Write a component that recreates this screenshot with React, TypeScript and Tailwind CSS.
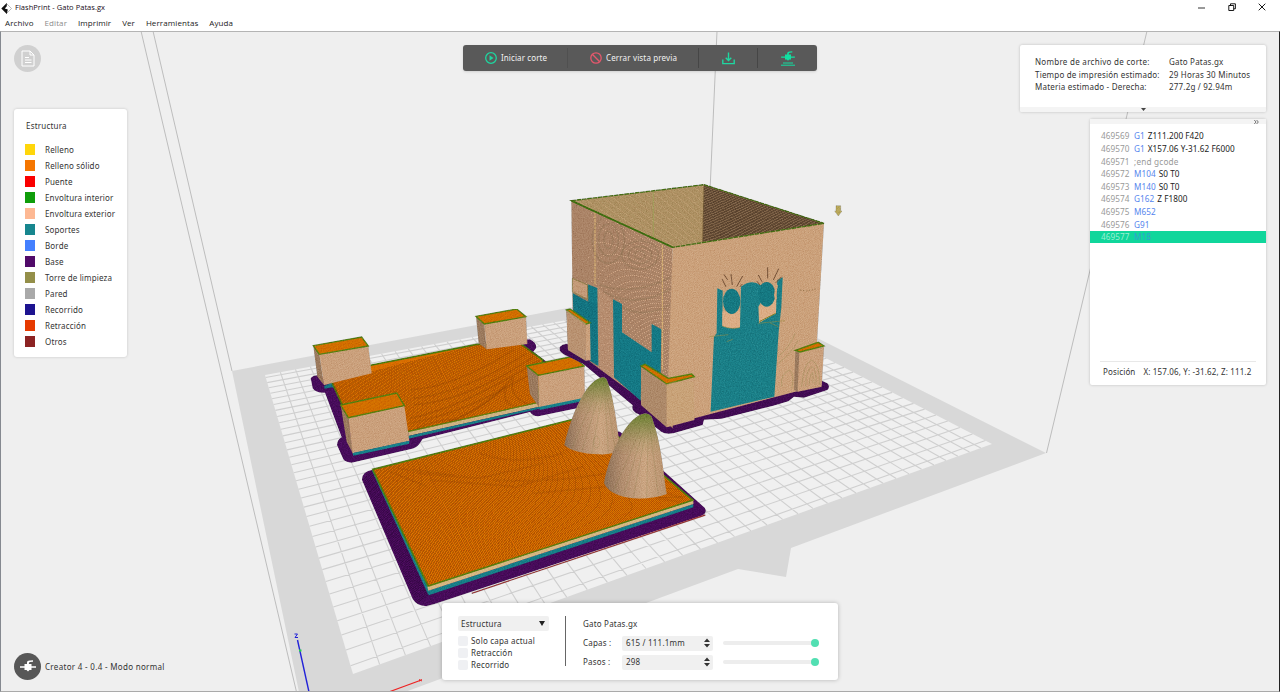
import React from "react";

type Pt = [number, number];

const legend = [
  { name: "Relleno", color: "bg-[#ffd60a]" },
  { name: "Relleno sólido", color: "bg-[#f57600]" },
  { name: "Puente", color: "bg-[#fa0000]" },
  { name: "Envoltura interior", color: "bg-[#0f9d0a]" },
  { name: "Envoltura exterior", color: "bg-[#fdb893]" },
  { name: "Soportes", color: "bg-[#17868e]" },
  { name: "Borde", color: "bg-[#4480ff]" },
  { name: "Base", color: "bg-[#510a69]" },
  { name: "Torre de limpieza", color: "bg-[#948f49]" },
  { name: "Pared", color: "bg-[#a9a9a9]" },
  { name: "Recorrido", color: "bg-[#1d1390]" },
  { name: "Retracción", color: "bg-[#e63a00]" },
  { name: "Otros", color: "bg-[#8c2323]" },
];

const gcode = [
  ["469569", "G1", "Z111.200 F420"],
  ["469570", "G1", "X157.06 Y-31.62 F6000"],
  ["469571", "", ";end gcode"],
  ["469572", "M104", "S0 T0"],
  ["469573", "M140", "S0 T0"],
  ["469574", "G162", "Z F1800"],
  ["469575", "M652", ""],
  ["469576", "G91", ""],
  ["469577", "M18", ""],
];

/* Projects a point of the unit build plate onto the screen. */
function plate(u: number, v: number): Pt {
  const g = 0.5636;
  const h = 0.8253;
  const w = 1 + g * u + h * v;
  const x = (353 + (639 + g * 992) * u + (-88 + h * 265) * v) / w;
  const y = (674 + (-230 + g * 444) * u + (-299 + h * 375) * v) / w;
  return [x, y];
}

function gridPath() {
  let d = "";
  for (let i = 1; i < 37; i++) {
    const a = plate(i / 37, 0);
    const b = plate(i / 37, 1);
    d += `M${a[0].toFixed(1)} ${a[1].toFixed(1)}L${b[0].toFixed(1)} ${b[1].toFixed(1)}`;
  }
  for (let i = 0; i < 33; i++) {
    const t = (i + 0.5) / 33;
    const a = plate(0, t);
    const b = plate(1, t);
    d += `M${a[0].toFixed(1)} ${a[1].toFixed(1)}L${b[0].toFixed(1)} ${b[1].toFixed(1)}`;
  }
  return d;
}

/* Lines ruled between edge a-b and edge d-c: the printed strands of a face. */
function ruled(a: Pt, b: Pt, c: Pt, d: Pt, n: number) {
  let s = "";
  for (let i = 0; i <= n; i++) {
    const t = i / n;
    s += `M${(a[0] + (b[0] - a[0]) * t).toFixed(2)} ${(a[1] + (b[1] - a[1]) * t).toFixed(2)}L${(d[0] + (c[0] - d[0]) * t).toFixed(2)} ${(d[1] + (c[1] - d[1]) * t).toFixed(2)}`;
  }
  return s;
}

function Strands({ pts, n, color = "#5a3a10", o = 0.4, w = 2 }: { pts: [Pt, Pt, Pt, Pt]; n: number; color?: string; o?: number; w?: number }) {
  return <path d={ruled(pts[0], pts[1], pts[2], pts[3], n)} stroke={color} strokeOpacity={o} strokeWidth={w} fill="none" shapeRendering="crispEdges" />;
}

function Block({ top, front, side }: { top: string; front: string; side: string }) {
  return (
    <g>
      <polygon points={side} fill="#9d7c61" />
      <polygon points={side} fill="url(#grain)" />
      <polygon points={front} fill="#d3a884" />
      <polygon points={front} fill="url(#grain)" />
      <polygon points={top} fill="#e57a00" />
      <polygon points={top} fill="url(#fill)" stroke="#56810e" strokeWidth="4" />
    </g>
  );
}

function Scene() {
  return (
    <svg className="absolute inset-0 h-full w-full" viewBox="1 32 1278 659" preserveAspectRatio="none">
      <defs>
        <filter id="speckle" x="0" y="0" width="1" height="1" colorInterpolationFilters="sRGB">
          <feTurbulence type="fractalNoise" baseFrequency="0.27" numOctaves="2" seed="4" result="n" />
          <feColorMatrix in="n" type="matrix" values="0.38 0 0 0 0.3  0.38 0 0 0 0.3  0.38 0 0 0 0.3  0 0 0 0 1" result="g" />
          <feBlend in="SourceGraphic" in2="g" mode="hard-light" result="h" />
          <feBlend in="g" in2="SourceGraphic" mode="soft-light" result="b" />
          <feComposite in="b" in2="SourceGraphic" operator="in" />
        </filter>
        <pattern id="grain" width="8" height="6" patternUnits="userSpaceOnUse" patternTransform="rotate(-13)">
          <path d="M0 1H5M4 4H8" stroke="#72512f" strokeOpacity=".34" strokeWidth="1.6" />
          <path d="M5 1H8" stroke="#f3c89b" strokeOpacity=".4" strokeWidth="1.6" />
        </pattern>
        <pattern id="fill" width="9" height="9" patternUnits="userSpaceOnUse" patternTransform="rotate(-32)">
          <path d="M0 2H9M0 6.5H9" stroke="#823e00" strokeOpacity=".42" strokeWidth="2" />
        </pattern>
        <pattern id="tealGrain" width="9" height="7" patternUnits="userSpaceOnUse" patternTransform="rotate(18)">
          <path d="M0 1H3M5 5H7" stroke="#4ba29a" strokeOpacity=".45" strokeWidth="1.5" />
          <path d="M4 2H8" stroke="#084f59" strokeOpacity=".35" strokeWidth="1.5" />
        </pattern>
        <linearGradient id="cone" x1="0" x2="1">
          <stop offset="0" stopColor="#8b705a" />
          <stop offset=".3" stopColor="#b89375" />
          <stop offset=".65" stopColor="#d4ae8b" />
          <stop offset="1" stopColor="#bd9875" />
        </linearGradient>
        <linearGradient id="tip" x1="0" x2="0" y1="0" y2="1">
          <stop offset="0" stopColor="#587b20" stopOpacity=".85" />
          <stop offset=".35" stopColor="#74823a" stopOpacity=".15" />
          <stop offset=".5" stopColor="#74823a" stopOpacity="0" />
        </linearGradient>
        <clipPath id="clipBack">
          <polygon points="95,275 215,225 530,163 660,160 728,210 712,340 325,425 145,385" />
        </clipPath>
        <clipPath id="clipFront">
          <polygon points="68,298 726,134 1030,392 235,650" />
        </clipPath>
        <clipPath id="clipLeft">
          <polygon points="94,92 398,232 398,775 305,690 150,575 98,425" />
        </clipPath>
      </defs>

      <g stroke="#bdbdbd" strokeWidth="1" fill="none">
        <path d="M141 31L296.500 692" />
        <path d="M153 31L232 371" />
        <path d="M717 31L706 283" />
        <path d="M1147 31L1046.500 453" />
      </g>
      <path d="M232 371L705.600 282L1046 453L791 548L786 577L738 569L405 692H299Z" fill="#d8d8d8" />
      <path d="M353 674L992 444L704 295L265 375Z" fill="#f0f0f0" />
      <path d={gridPath()} stroke="#cfcfcf" strokeWidth="1.1" fill="none" />

      {/* plate with four corner blocks */}
      <g transform="translate(300 290) scale(.333333)" filter="url(#speckle)">
        <path d="M32 265Q40 253 60 256L95 275L660 150L690 148Q712 160 708 175L700 185L740 215L853 300V350L715 379Q700 380 690 366L368 447L358 462Q350 474 330 478L155 518Q135 517 130 508L111 465Q112 448 125 442L75 308Q48 310 38 295Z" fill="#480c5c" />
        <path d="M72 283L95 278L150 395L160 497L140 455Z" fill="#480c5c" />
        <path d="M72 288L95 278L108 300L97 292L74 296Z" fill="#177580" />
        <polygon points="95,275 215,225 530,163 660,160 728,210 712,340 325,425 145,385" fill="#d96f00" stroke="#4b7c0c" strokeWidth="5" />
        <g clipPath="url(#clipBack)">
          <Strands pts={[[95, 275], [660, 130], [800, 330], [150, 470]]} n={170} color="#843d00" o={0.55} />
          <g fill="none" stroke="#8d4200" strokeOpacity=".3" strokeWidth="5">
            <path d="M330 385Q470 360 720 210" /><path d="M330 400Q510 365 720 235" /><path d="M340 345Q510 330 700 200" />
            <path d="M340 325Q490 310 680 190" /><path d="M430 400Q550 365 640 260Q620 320 690 345" /><path d="M350 415Q430 380 500 390" />
            <path d="M480 380Q570 340 620 285Q600 340 650 350" /><path d="M330 300Q470 290 640 180" />
          </g>
        </g>
        <polygon points="325,425 718,338 718,350 325,438" fill="#cfb384" />
        <polygon points="325,438 718,350 718,356 325,446" fill="#177f88" />
        <path d="M325 425L712 338" stroke="#64820f" strokeWidth="3" />
        <Block top="528,79 650,57 678,80 553,102" front="553,102 678,80 682,162 560,178" side="528,79 553,102 560,178 536,160" />
        <Block top="40,167 185,141 205,168 58,193" front="58,193 205,168 215,250 72,285" side="40,167 58,193 72,285 52,260" />
        <Block top="122,345 290,309 313,347 145,383" front="145,383 313,347 328,453 158,490" side="122,345 145,383 160,493 140,455" />
        <polygon points="158,489 328,452 328,461 160,497" fill="#17838c" />
        <Block top="680,228 820,199 853,228 715,256" front="715,256 853,228 855,330 717,352" side="680,228 715,256 717,352 690,312" />
        <polygon points="717,351 850,324 850,333 719,360" fill="#17838c" />
      </g>

      {/* large hollow box */}
      <g transform="translate(540 170) scale(.333333)" filter="url(#speckle)">
        <path d="M60 530Q68 520 82 522L150 568L305 690L845 632L862 640Q872 650 862 660L792 683L762 680L745 694L700 707L545 746L492 749L488 765L400 790Q376 794 365 786L296 733Q272 722 278 706L130 582L75 555Q54 544 60 530Z" fill="#420b54" />
        <polygon points="94,92 492,44 852,160 398,232" fill="#bf9f72" />
        <polygon points="94,92 492,44 488,216 398,232" fill="url(#grain)" />
        <polygon points="492,44 852,160 488,216" fill="#806448" />
        <Strands pts={[[492, 44], [488, 216], [560, 226], [852, 160]]} n={34} color="#3b2819" o={0.7} />
        <Strands pts={[[94, 92], [398, 232], [488, 216], [492, 44]]} n={50} color="#82723c" o={0.4} w={1.5} />
        <polygon points="94,92 398,232 398,775 305,690 150,575 98,425" fill="#cda383" />
        <g clipPath="url(#clipLeft)">
          <Strands pts={[[94, 92], [94, 545], [398, 780], [398, 232]]} n={155} color="#6b4b32" o={0.5} />
          <path d="M172 350V600L225 640V395Z" fill="#c79a7c" fillOpacity=".4" />
          <g fill="none" stroke="#71643f" strokeOpacity=".2" strokeWidth="5">
            <ellipse cx="300" cy="255" rx="55" ry="42" /><ellipse cx="300" cy="255" rx="35" ry="26" /><ellipse cx="300" cy="255" rx="16" ry="12" />
            <ellipse cx="205" cy="210" rx="48" ry="70" /><ellipse cx="205" cy="210" rx="30" ry="48" /><ellipse cx="205" cy="210" rx="13" ry="26" />
            <path d="M180 345Q280 380 395 320M190 365Q290 420 395 355M215 390Q300 460 395 400" />
          </g>
        </g>
        <polygon points="398,232 852,160 823,650 463,745 380,770" fill="#d4a983" />
        <polygon points="398,232 852,160 823,650 463,745 380,770" fill="url(#grain)" />
        <g fill="#147a86">
          <path d="M98 370L145 395L143 343L172 354L175 588L150 572L148 455L100 425Z" />
          <path d="M219 388L246 402V487L335 547V462L364 478L362 612L305 592L302 692L222 622Z" />
        </g>
        <Strands pts={[[98, 370], [98, 565], [172, 585], [172, 405]]} n={40} color="#0a4d5b" o={0.3} w={1.5} />
        <path d="M97 325L143 345V388L97 365Z" fill="#d1a782" fillOpacity=".65" stroke="#7b7436" strokeWidth="2" />
        <g>
          <path d="M532 355L548 362L547 468Q575 480 600 472L603 350Q635 327 660 345L690 350L655 410L657 458L708 430L712 330L728 322L724 410L716 485L703 680L512 725L522 500L530 490Z" fill="#188089" />
          <path d="M532 355L548 362L547 468Q575 480 600 472L603 350Q635 327 660 345L690 350L655 410L657 458L708 430L712 330L728 322L724 410L716 485L703 680L512 725L522 500L530 490Z" fill="url(#tealGrain)" />
          <path d="M547 425L600 420V472Q570 478 547 468ZM657 408L708 388V430L657 458Z" fill="#dcae86" />
          <ellipse cx="575" cy="394" rx="26" ry="38" fill="#157a83" />
          <ellipse cx="680" cy="373" rx="26" ry="37" fill="#157a83" />
          <path d="M711 345L705 375L708 388" stroke="#d6a77f" strokeWidth="6" fill="none" />
          <g stroke="#775338" strokeWidth="3" fill="none">
            <path d="M546 327L558 350M573 312L577 345M608 318L590 350M552 313L563 330M600 350L607 342M655 315L667 337M683 292V325M716 296L700 330M725 320L708 338M660 345L650 333" />
          </g>
          <path d="M658 455L707 430" stroke="#82832c" strokeWidth="3" />
          <path d="M547 468Q575 480 600 472M508 500L565 494M655 460L735 452M690 459L715 470M560 515L578 508" stroke="#9a8c3c" strokeOpacity=".7" strokeWidth="2.200" fill="none" />
        </g>
        <path d="M780 360L800 363L832 356" stroke="#8a6a3e" strokeWidth="2" strokeDasharray="4 5" fill="none" />
        <path d="M165 125V345M367 225V600" stroke="#ddb875" strokeWidth="3" strokeDasharray="9 2" />
        <path d="M340 64V205" stroke="#a3a05b" strokeWidth="3" />
        <path d="M492 44L488 216" stroke="#6c5430" strokeWidth="2" />
        <path d="M94 92L492 44L852 160L398 232Z" stroke="#456f13" strokeWidth="4" strokeDasharray="14 2" fill="none" />
        <path d="M94 92L398 232" stroke="#3f6f10" strokeWidth="5" />
        <Block top="79,420 90,417 150,458 137,462" front="137,460 150,458 152,570 137,572" side="79,420 137,460 137,572 84,540" />
        <polygon points="79,420 137,460 137,572 84,540" fill="#cba27e" fillOpacity=".65" />
        <Block top="303,588 315,583 385,625 455,612 463,620 380,642" front="380,640 463,620 463,750 380,772" side="303,590 380,640 380,772 303,705" />
        <polygon points="303,592 380,643 380,772 303,705" fill="#cba27e" fillOpacity=".4" />
        <path d="M400 635H461L463 748L380 770V642Z" fill="#c7a675" fillOpacity=".5" />
        <Block top="766,541 835,517 852,528 780,546" front="778,545 852,530 845,650 773,665" side="766,543 780,545 775,665 762,660" />
        <g fill="none" stroke="#8e884c" strokeOpacity=".35" strokeWidth="3">
          <path d="M785 650Q790 580 815 570Q842 585 838 645M797 650Q797 598 817 590Q832 600 827 645M807 645Q810 610 819 608V640" />
          <path d="M715 560Q750 530 765 490M715 580Q755 550 775 510M725 650Q720 610 750 600Q765 620 755 655" />
        </g>
        <path d="M888 107H902V123H906L895 138L884 123H888Z" fill="#b9a85b" stroke="#8f823b" strokeWidth="1" />
      </g>

      {/* front plate with two cones */}
      <g transform="translate(350 370) scale(.333333)" filter="url(#speckle)">
        <path d="M68 299Q35 304 36 330L188 687Q202 710 230 708L253 702L1055 437Q1074 428 1064 413L810 185L660 160Z" fill="#480b5b" />
        <Strands pts={[[40, 330], [200, 700], [240, 670], [68, 300]]} n={75} color="#2a0538" o={0.6} />
        <path d="M365 670L1066 435" stroke="#9d3838" strokeWidth="4" />
        <path d="M66 302L235 675L240 640L70 296Z" fill="#187f88" />
        <polygon points="68,298 726,134 1030,392 235,650" fill="#dc7000" />
        <g clipPath="url(#clipFront)">
          <Strands pts={[[40, 250], [700, 85], [1120, 440], [210, 730]]} n={190} color="#863d00" o={0.6} w={2.2} />
          <g fill="none" stroke="#923f00" strokeOpacity=".2" strokeWidth="6">
            <path d="M200 310L390 325L580 280M240 330L500 350L700 290M390 250Q500 290 640 250M430 330Q600 340 770 310M550 370L770 350" />
            <path d="M120 305L230 350M140 295L310 315M920 360L1000 385M920 385L990 395" />
          </g>
        </g>
        <path d="M235 650L68 298L726 134L1030 392" fill="none" stroke="#527e0d" strokeWidth="5" />
        <polygon points="234,662 1030,402 1030,412 236,676" fill="#168089" />
        <polygon points="232,650 1030,391 1030,402 235,662" fill="#d6b883" />
        <path d="M235 648L1030 390" stroke="#55800d" strokeWidth="4" />
        {[
          "M643 225C665 130 705 40 750 24Q762 18 770 28C795 90 801 180 808 210L798 246Q775 255 748 253Q670 250 643 225Z",
          "M762 340C780 240 830 150 875 133Q893 125 905 140C935 220 940 310 950 372Q910 388 850 385Q780 378 762 340Z",
        ].map((d) => (
          <g key={d}>
            <path d={d} fill="url(#cone)" />
            <path d={d} fill="url(#grain)" />
            <path d={d} fill="url(#tip)" />
          </g>
        ))}
        <g fill="none" stroke="#7d7845" strokeOpacity=".25" strokeWidth="2.500">
          <path d="M755 30L665 235M758 40L695 245M762 50L725 250M764 60L775 250M766 50L795 235M888 140L790 365M890 150L820 378M892 160L850 382M895 160L890 382M898 160L925 376" />
          <ellipse cx="740" cy="216" rx="9" ry="18" />
        </g>
      </g>

      {/* axes */}
      <path d="M297.500 640L309 692" stroke="#2222d8" strokeWidth="1.400" />
      <path d="M299 650.500H301.500" stroke="#22d64a" strokeWidth="2" />
      <path d="M390 691.500L420 680.500" stroke="#e22" strokeWidth="1.200" />
      <path d="M419 679.500L422 681M419 681L422 679.500" stroke="#e22" strokeWidth="1" />
      <path d="M294.500 634H297.500L295 637.500H298" stroke="#2222d8" strokeWidth="1" fill="none" />
    </svg>
  );
}

function Nozzle({ className }: { className: string }) {
  return (
    <svg className={className} viewBox="0 0 18 14" fill="currentColor">
      <path d="M5.500 4H8V2.800Q8 .5 11 .6L14 .3V1.700L11 2Q9.800 2 9.800 4H12.500V6.300H17V7.800H12.500V10H10.500L9 11.500L7.500 10H5.500V7.800H1V6.300H5.500Z" />
    </svg>
  );
}

function Spin({ value }: { value: string }) {
  return (
    <div className="flex h-[15px] w-[91px] items-center justify-between rounded-xs bg-[#f0f0f0] pr-[3px] pl-1">
      <span>{value}</span>
      <svg className="h-[10px] w-[6px]" viewBox="0 0 6 10" fill="#333">
        <path d="M3 0.500L6 4H0ZM3 9.500L6 6H0Z" />
      </svg>
    </div>
  );
}

function Track() {
  return (
    <div className="flex h-2 w-[96px] items-center">
      <div className="h-1 flex-1 rounded-full bg-[#ededed]" />
      <div className="-ml-1 size-2 rounded-full bg-[#52dfb2]" />
    </div>
  );
}

export default function App() {
  return (
    <div className="flex h-[692px] w-[1280px] flex-col overflow-hidden bg-white font-['Noto_Sans','Open_Sans',sans-serif] text-[8px] leading-none tracking-[0.2px] text-[#333]">
      <header className="flex h-[31px] shrink-0 flex-col">
        <div className="flex h-4 items-center justify-between pr-[14px] pl-[1px]">
          <div className="flex items-center gap-[3px]">
            <svg className="size-[11px]" viewBox="0 0 11 11">
              <path d="M5.500 .5L10.500 5.500L5.500 10.500" fill="#fff" stroke="#999" strokeWidth=".7" />
              <path d="M5.800 0V3.200L3.800 5.500L6.800 6.500L5.800 11L.3 5.500Z" fill="#111" />
            </svg>
            <span className="font-['Open_Sans',sans-serif] text-[7.500px] tracking-[0.04px] text-[#180c20]">FlashPrint - Gato Patas.gx</span>
          </div>
          <div className="flex items-center gap-[22px] pb-[2px] text-black">
            <svg className="size-[8px]" viewBox="0 0 8 8"><path d="M0 5H7" stroke="currentColor" strokeWidth=".8" /></svg>
            <svg className="size-[8px]" viewBox="0 0 8 8" fill="none" stroke="currentColor"><path d="M.8 2.500H5.700V7.500H.8ZM2.500 2.500V.8H7.400V5.800H5.700" strokeWidth=".9" /></svg>
            <svg className="size-[8px]" viewBox="0 0 8 8"><path d="M.7 .7L7.300 7.300M7.300 .7L.7 7.300" stroke="currentColor" strokeWidth=".9" /></svg>
          </div>
        </div>
        <nav className="flex h-[13px] items-center gap-[10.900px] pl-[5px] font-['Open_Sans',sans-serif] text-[8px] tracking-[0.1px] text-[#222]">
          <span>Archivo</span>
          <span className="text-[#8c8c8c]">Editar</span>
          <span>Imprimir</span>
          <span>Ver</span>
          <span>Herramientas</span>
          <span>Ayuda</span>
        </nav>
      </header>

      <main className="relative h-[661px] overflow-hidden border-t border-r border-b border-l border-t-[#b4b4b4] border-r-[#222] border-b-[#aaa] border-l-[#858990] bg-[#efefef]">
        <Scene />

        <div className="absolute top-[13px] left-[13px] flex size-[27px] items-center justify-center rounded-full bg-[#d0d0d0] text-white">
          <svg className="h-[17px] w-[14px]" viewBox="0 0 14 17" fill="none" stroke="currentColor">
            <path d="M1 1H9L13 5V16H1ZM9 1V5H13M4 7.500H8M4 10H10.500M4 12.500H10.500" strokeWidth="1" />
          </svg>
        </div>

        <section className="absolute top-[77px] left-[13px] h-[248px] w-[113px] rounded-[3px] bg-white pt-[12px] pl-[11px] shadow-[0_0_3px_rgba(0,0,0,0.18)]">
          <h2 className="pl-[1px] leading-[10px]">Estructura</h2>
          <ul className="mt-[10.500px]">
            {legend.map((l) => (
              <li key={l.name} className="flex h-4 items-center gap-[10px] tracking-[0.15px] whitespace-nowrap">
                <span className={`h-[11px] w-[10px] ${l.color}`} />
                <span>{l.name}</span>
              </li>
            ))}
          </ul>
        </section>

        <div className="absolute top-[13px] left-[462px] flex h-[26px] w-[354px] items-center rounded-[3px] bg-[#595959] text-[#f2f2f2] shadow-sm">
          <div className="flex h-5 w-[105px] items-center gap-1 border-r border-[#505050] pl-[22px] tracking-[0.1px]">
            <svg className="size-[12px]" viewBox="0 0 12 12"><circle cx="6" cy="6" r="5.300" fill="none" stroke="#1fd6a0" strokeWidth="1.300" /><path d="M4.500 3.300L8.500 6L4.500 8.700Z" fill="#1fd6a0" /></svg>
            <span>Iniciar corte</span>
          </div>
          <div className="flex h-5 w-[131px] items-center gap-1 border-r border-[#464646] pl-[22px] tracking-[0.15px]">
            <svg className="size-[12px]" viewBox="0 0 12 12" fill="none" stroke="#e5586d" strokeWidth="1.300"><circle cx="6" cy="6" r="5.200" /><path d="M2.300 2.300L9.700 9.700" /></svg>
            <span>Cerrar vista previa</span>
          </div>
          <div className="flex h-5 w-[59px] items-center justify-center border-r border-[#464646]">
            <svg className="size-[13px]" viewBox="0 0 13 13" fill="none" stroke="#1fd6a0" strokeWidth="1.400"><path d="M.8 7.500V11.600H12.200V7.500M6.500 .5V8M3.700 5.800L6.500 8.500L9.300 5.800" /></svg>
          </div>
          <div className="flex h-5 flex-1 flex-col items-center justify-center text-[#12dfa1]">
            <Nozzle className="h-[12px] w-[16px]" />
            <svg className="-mt-[1px] h-[4px] w-[14px]" viewBox="0 0 14 4"><path d="M2 1H12M0 3.200H14" stroke="currentColor" strokeWidth="1" /></svg>
          </div>
        </div>

        <section className="absolute top-[13px] left-[1019px] flex h-[67px] w-[246px] flex-col justify-between overflow-hidden rounded-[2px] bg-white shadow-[0_0_3px_rgba(0,0,0,0.22)]">
          <dl className="grid grid-cols-[134px_1fr] pt-[11px] pl-[15px] leading-[12.500px] whitespace-nowrap">
            <dt className="tracking-[0.28px]">Nombre de archivo de corte:</dt>
            <dd>Gato Patas.gx</dd>
            <dt>Tiempo de impresión estimado:</dt>
            <dd>29 Horas 30 Minutos</dd>
            <dt>Materia estimado - Derecha:</dt>
            <dd>277.2g / 92.94m</dd>
          </dl>
          <div className="flex h-[5px] items-center justify-center bg-[#f4f4f4]">
            <svg className="h-[3px] w-[5px]" viewBox="0 0 5 3"><path d="M0 0H5L2.500 3Z" fill="#444" /></svg>
          </div>
        </section>

        <section className="absolute top-[87px] left-[1089px] flex h-[266px] w-[176px] flex-col rounded-[2px] bg-white shadow-[0_0_3px_rgba(0,0,0,0.22)]">
          <div className="flex h-[5px] items-center justify-end bg-[#f4f4f4] pr-[7px]">
            <svg className="h-[4px] w-[5px]" viewBox="0 0 5 4" fill="none" stroke="#666" strokeWidth=".9"><path d="M.3 0L2 2L.3 4M2.600 0L4.300 2L2.600 4" /></svg>
          </div>
          <ol className="mt-[6.300px] text-[8.200px] tracking-[0.05px]">
            {gcode.map(([n, cmd, rest]) => (
              <li key={n} className={n === "469577" ? "flex h-[12px] items-center bg-[#10d69b] pl-[11px] text-[#9aefd2]" : "flex h-[12.600px] items-center pl-[11px] text-[#999]"}>
                <span className="w-[33px]">{n}</span>
                <span className={n === "469577" ? "text-[#329fd0]" : "text-[#5585ee]"}>{cmd}</span>
                <span className={cmd ? "ml-[3px] text-[#222]" : "tracking-[0.2px] text-[#999]"}>{rest}</span>
              </li>
            ))}
          </ol>
          <footer className="mx-[10px] mt-auto flex h-[24px] items-center gap-[8px] border-t border-[#e8e8e8] pb-[3px] pl-[3px] tracking-[0.15px] whitespace-nowrap">
            <span>Posición</span>
            <span>X: 157.06, Y: -31.62, Z: 111.2</span>
          </footer>
        </section>

        <section className="absolute top-[571px] left-[441px] flex h-[77px] w-[396px] rounded-[3px] bg-white pt-[13px] pl-[16px] shadow-[0_0_4px_rgba(0,0,0,0.25)]">
          <div className="flex w-[107px] flex-col">
            <div className="mb-[3.500px] flex h-[15px] w-[91px] shrink-0 items-center justify-between rounded-xs bg-[#f0f0f0] pr-[4px] pl-[3px]">
              <span>Estructura</span>
              <svg className="h-[5px] w-[6px]" viewBox="0 0 6 5"><path d="M0 0H6L3 5Z" fill="#222" /></svg>
            </div>
            {["Solo capa actual", "Retracción", "Recorrido"].map((t) => (
              <label key={t} className="flex h-[12.300px] shrink-0 items-center gap-[3px]">
                <span className="size-[10px] rounded-xs bg-[#eff0f3]" />
                <span>{t}</span>
              </label>
            ))}
          </div>
          <div className="h-[50px] w-px bg-[#666]" />
          <div className="flex flex-col pl-[17px]">
            <span className="flex h-[15px] items-center">Gato Patas.gx</span>
            <div className="mt-[4.500px] flex items-center">
              <span className="w-[39px]">Capas :</span>
              <Spin value="615 / 111.1mm" />
              <div className="pl-[10px]"><Track /></div>
            </div>
            <div className="mt-[4px] flex items-center">
              <span className="w-[39px]">Pasos :</span>
              <Spin value="298" />
              <div className="pl-[10px]"><Track /></div>
            </div>
          </div>
        </section>

        <div className="absolute top-[621px] left-[13px] flex h-[27px] items-center gap-[4px]">
          <div className="flex size-[27px] items-center justify-center rounded-full bg-[#575757] text-white">
            <Nozzle className="h-[14px] w-[18px]" />
          </div>
          <span className="tracking-[0.31px]">Creator 4 - 0.4 - Modo normal</span>
        </div>
      </main>
    </div>
  );
}
